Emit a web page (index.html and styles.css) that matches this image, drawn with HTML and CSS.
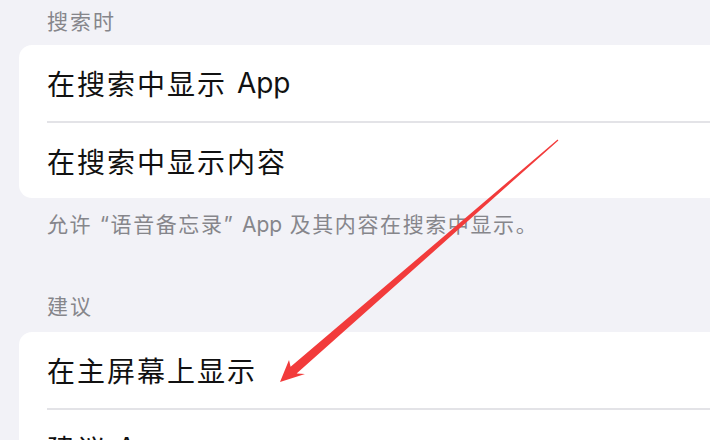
FILE: index.html
```html
<!DOCTYPE html>
<html>
<head>
    <meta charset="utf-8" />
    <title>语音备忘录</title>
    <link rel="stylesheet" href="styles.css">
</head>
<body>
    <div class="page">
        <div class="label">搜索时</div>
        <div class="card">
            <div class="row">在搜索中显示 <span class="latin">App</span></div>
            <div class="row">在搜索中显示内容</div>
        </div>
        <div class="footer">允许 “语音备忘录” <span class="latin">App</span> 及其内容在搜索中显示。</div>

        <div class="label label-gap">建议</div>
        <div class="card">
            <div class="row">在主屏幕上显示</div>
            <div class="row">建议 <span class="latin">App</span></div>
        </div>

        <!-- red annotation arrow on top of the screenshot -->
        <svg class="arrow" width="710" height="440" viewBox="0 0 710 440">
            <polygon fill="#f23b3b" points="557.6,139.5 558.4,140.5 296.6,373.6 305,374 280,382 289,360 290.6,366.8" />
        </svg>
    </div>
</body>
</html>
```

FILE: styles.css
```css
body {
    margin: 0;
    background-color: #f2f2f7;
    overflow: hidden;
}

.page {
    position: relative;
    width: 710px;
    height: 440px;
    overflow: hidden;
    font-family: Inter, "Noto Sans CJK SC", sans-serif;
}

.label {
    padding: 6px 0 11px 47px;
    font-family: "Noto Sans CJK SC", sans-serif;
    font-size: 21px;
    line-height: 28px;
    letter-spacing: 2px;
    color: #86868b;
}

.label-gap {
    padding-top: 53px;
    padding-bottom: 13px;
}

.card {
    margin-left: 19px;
    margin-right: -30px;
    background-color: #ffffff;
    border-radius: 13px;
}

.row {
    display: flex;
    align-items: center;
    height: 75px;
    margin-left: 28px;
    font-size: 28px;
    letter-spacing: 2px;
    color: #111111;
    border-bottom: 2px solid #e3e3e7;
    white-space: pre;
}

.card .row:first-child {
    height: 76px;
}

.card .row:last-child {
    border-bottom: none;
}

.latin {
    letter-spacing: 0;
}

.footer {
    padding: 14px 0 0 47px;
    font-size: 21px;
    line-height: 26px;
    letter-spacing: 1.6px;
    color: #86868b;
}

.arrow {
    position: absolute;
    left: 0;
    top: 0;
}
```
